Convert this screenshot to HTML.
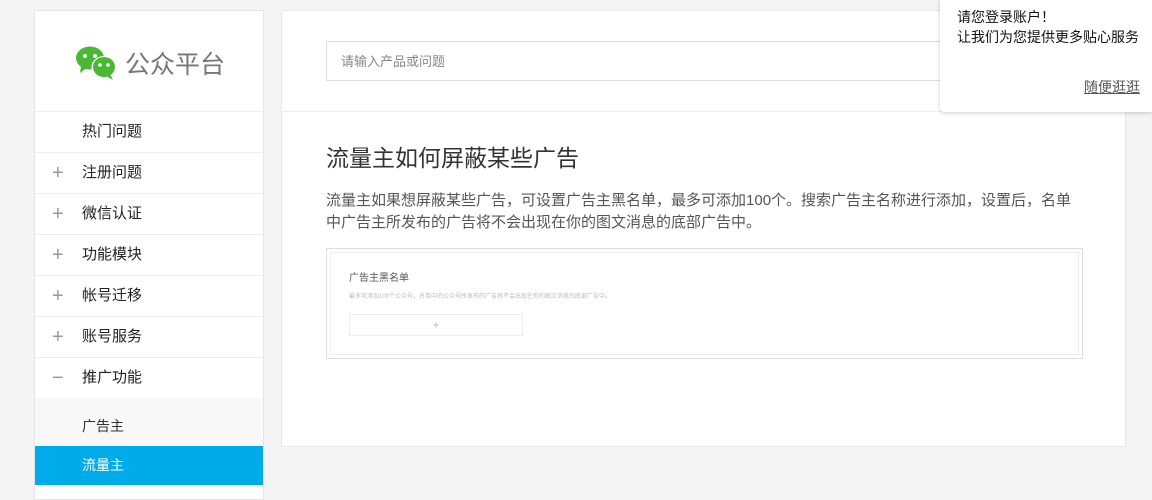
<!DOCTYPE html><html><head><meta charset="utf-8"><style>
body{margin:0;width:1152px;height:497px;background:#f4f4f4;font-family:"Liberation Sans","Noto Sans CJK SC",sans-serif;overflow:hidden;position:relative}
.side{position:absolute;left:34px;top:10px;width:230px;height:490px;background:#fff;border:1px solid #e6e6e6;box-sizing:border-box}
.logo{height:100px;border-bottom:1px solid #eee;position:relative}
.logo span{position:absolute;left:90px;top:34px;font-size:25px;color:#777}
.item{height:40px;border-bottom:1px solid #eee;font-size:15px;color:#222;line-height:40px;padding-left:47px;position:relative}
.item i{position:absolute;left:17px;top:0;font-style:normal;color:#999;font-size:20px}
.sub{background:#f8f8f8;height:48px;line-height:56px;font-size:14px;color:#333;padding-left:47px}
.act{background:#00abe9;color:#fff;height:39px;line-height:39px;font-size:14px;padding-left:47px}
.main{position:absolute;left:281px;top:10px;width:845px;height:437px;background:#fff;border:1px solid #e8e8e8;box-sizing:border-box}
.search{position:absolute;left:44px;top:30px;width:640px;height:40px;border:1px solid #ddd;box-sizing:border-box;font-size:13px;color:#888;line-height:40px;padding-left:14px}
.hr{position:absolute;left:0;right:0;top:100px;border-top:1px solid #eee}
h1{position:absolute;left:44px;top:128px;margin:0;font-size:23px;font-weight:normal;color:#333}
.p{position:absolute;left:44px;top:179px;width:760px;font-size:15px;line-height:22px;color:#555}
.img{position:absolute;left:44px;top:237px;width:757px;height:111px;border:1px solid #ddd;box-sizing:border-box}
.img .in{position:absolute;left:3px;top:3px;right:3px;bottom:3px;border:1px solid #eee}
.pop{position:absolute;left:940px;top:-2px;width:215px;height:114px;background:#fff;border-radius:4px;box-shadow:0 1px 4px rgba(0,0,0,.2);font-size:14px;color:#111}
</style></head><body>
<div class="side">
<div class="logo"><svg style="position:absolute;left:41px;top:35px" width="42" height="34" viewBox="0 0 42 34"><ellipse cx="14" cy="12" rx="14" ry="11.5" fill="#4ab835"/><path d="M5 20 L4 27 L11 22Z" fill="#4ab835"/><circle cx="9" cy="10" r="2" fill="#fff"/><circle cx="19" cy="10" r="2" fill="#fff"/><ellipse cx="28" cy="21" rx="12.5" ry="11" fill="#fff"/><ellipse cx="28" cy="21" rx="11" ry="10" fill="#4ab835"/><path d="M34 28 L37 34 L30 30Z" fill="#4ab835"/><circle cx="24" cy="19" r="1.8" fill="#fff"/><circle cx="32" cy="19" r="1.8" fill="#fff"/></svg><span>公众平台</span></div>
<div class="item">热门问题</div>
<div class="item"><i>+</i>注册问题</div>
<div class="item"><i>+</i>微信认证</div>
<div class="item"><i>+</i>功能模块</div>
<div class="item"><i>+</i>帐号迁移</div>
<div class="item"><i>+</i>账号服务</div>
<div class="item" style="border:0"><i>−</i>推广功能</div>
<div class="sub">广告主</div>
<div class="act">流量主</div>
</div>
<div class="main">
<div class="search">请输入产品或问题</div>
<div class="hr"></div>
<h1>流量主如何屏蔽某些广告</h1>
<div class="p">流量主如果想屏蔽某些广告，可设置广告主黑名单，最多可添加100个。搜索广告主名称进行添加，设置后，名单中广告主所发布的广告将不会出现在你的图文消息的底部广告中。</div>
<div class="img"><div class="in">
<div style="position:absolute;left:18px;top:16px;font-size:10px;color:#555">广告主黑名单</div>
<div style="position:absolute;left:18px;top:38px;font-size:6px;color:#bbb;white-space:nowrap">最多可添加100个公众号，名单中的公众号所发布的广告将不会出现在你的图文消息的底部广告中。</div>
<div style="position:absolute;left:18px;top:61px;width:172px;height:20px;border:1px solid #eee;text-align:center;line-height:20px;color:#bbb;font-size:12px">+</div>
</div></div>
</div>
<div class="pop"><div style="position:absolute;left:17px;top:9px;line-height:20px">请您登录账户！<br>让我们为您提供更多贴心服务</div><div style="position:absolute;right:15px;top:79px;text-decoration:underline;color:#555">随便逛逛</div></div>
</body></html>
